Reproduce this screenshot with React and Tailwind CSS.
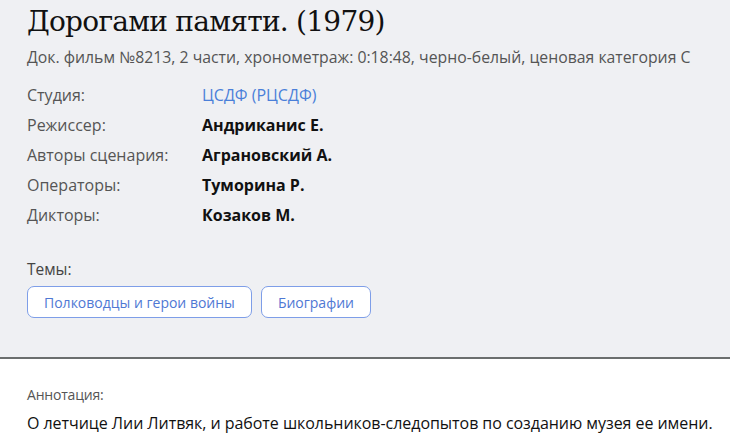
export default function App() {
  const rows = [
    ["Студия:", "ЦСДФ (РЦСДФ)", true],
    ["Режиссер:", "Андриканис Е.", false],
    ["Авторы сценария:", "Аграновский А.", false],
    ["Операторы:", "Туморина Р.", false],
    ["Дикторы:", "Козаков М.", false],
  ];
  return (
    <div className="w-[730px] h-[446px] overflow-hidden bg-white" style={{ fontFamily: '"Open Sans", "Noto Sans", sans-serif' }}>
      <div className="bg-[#eff0f3] h-[359px] border-b-2 border-[#6b6e6e] pl-[27px] pt-[4px]">
        <h1 className="text-[28px] leading-[36px] text-[#111] tracking-[-0.75px]" style={{ fontFamily: '"DejaVu Serif", serif' }}>Дорогами памяти. (1979)</h1>
        <div className="text-[15.8px] leading-[22px] text-[#555] mt-[6px]">Док. фильм №8213, 2 части, хронометраж: 0:18:48, черно-белый, ценовая категория C</div>
        <div className="mt-[12px] flex flex-col">
          {rows.map(([l, v, link]) => (
            <div key={l} className="flex h-[30px] items-center text-[16px]">
              <div className="w-[175px] text-[#555]">{l}</div>
              <div className={link ? "text-[#4a7fd9]" : "font-bold text-[#111]"}>{v}</div>
            </div>
          ))}
        </div>
        <div className="mt-[28px] text-[15.5px] leading-[22px] text-[#444]">Темы:</div>
        <div className="mt-[6px] flex gap-[9px]">
          <div className="h-[32px] px-[16px] flex items-center rounded-[7px] border border-[#7e9ee8] bg-white text-[14px] text-[#4f78d4]">Полководцы и герои войны</div>
          <div className="h-[32px] px-[16px] flex items-center rounded-[7px] border border-[#7e9ee8] bg-white text-[14px] text-[#4f78d4]">Биографии</div>
        </div>
      </div>
      <div className="pl-[27px] pt-[26px]">
        <div className="text-[14px] leading-[20px] text-[#555] tracking-[-0.2px]">Аннотация:</div>
        <div className="mt-[7px] text-[16px] leading-[22px] text-[#111] tracking-[-0.05px]">О летчице Лии Литвяк, и работе школьников-следопытов по созданию музея ее имени.</div>
      </div>
    </div>
  );
}
